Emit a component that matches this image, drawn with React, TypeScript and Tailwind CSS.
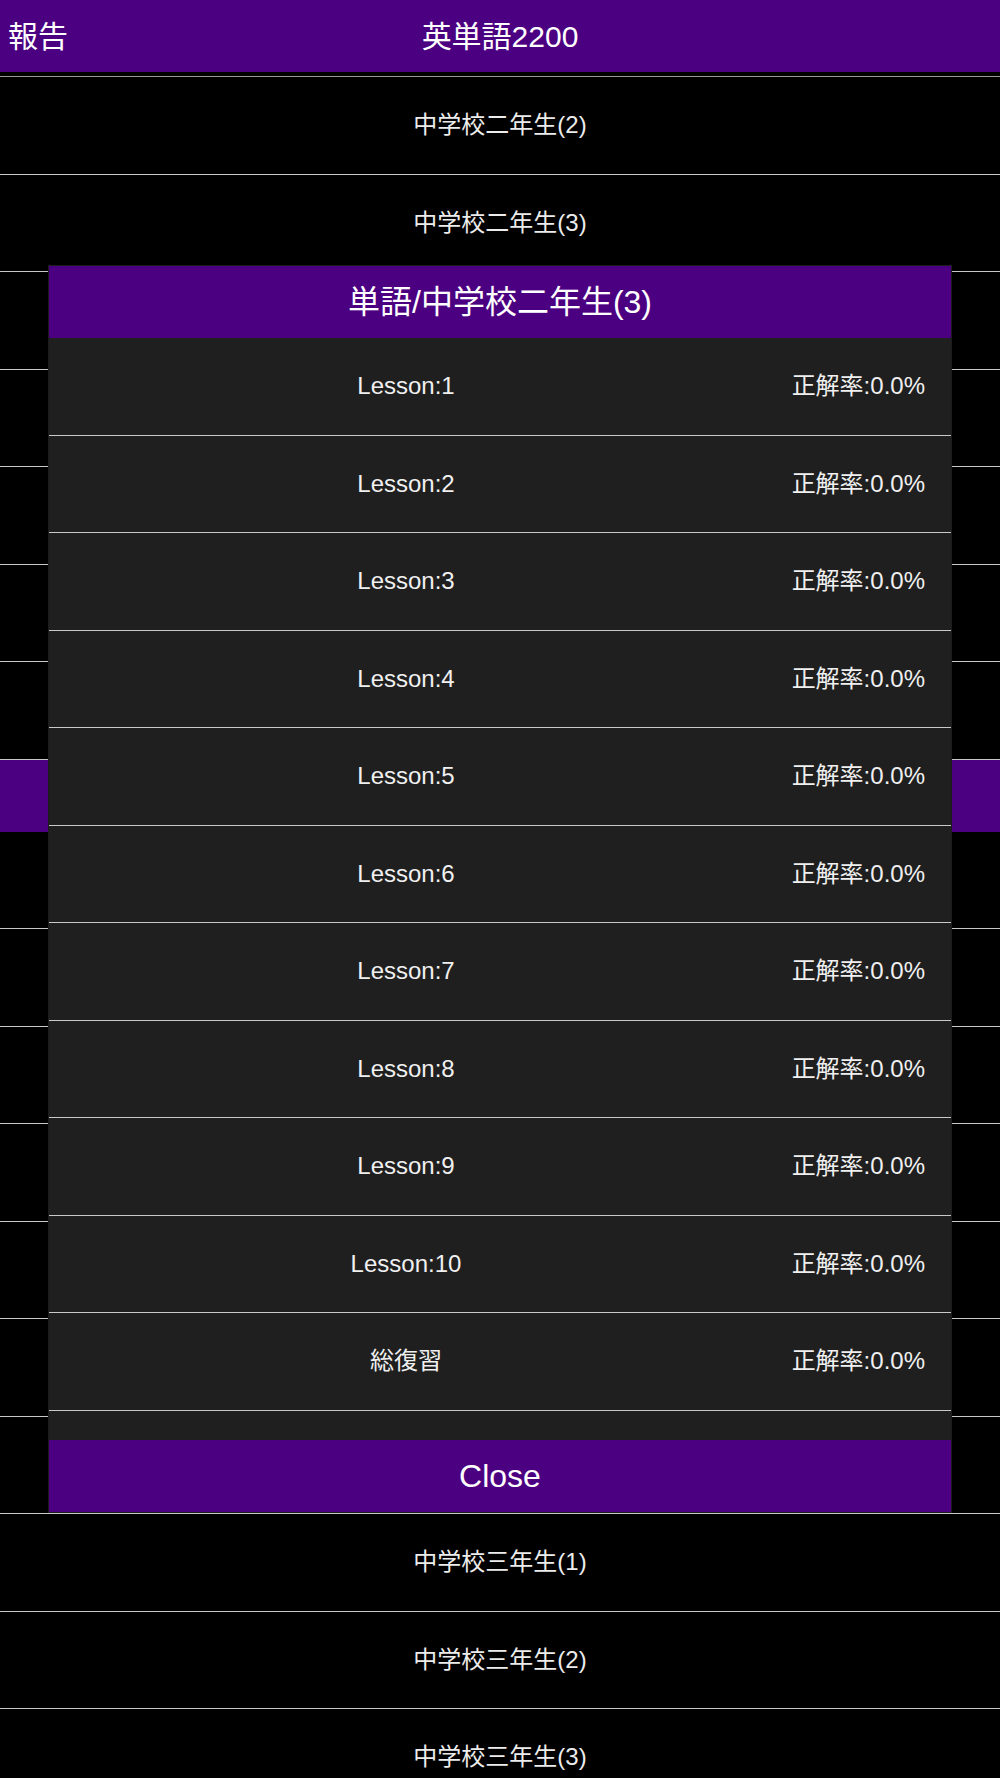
import React from "react";

const FONT = { fontFamily: '"Liberation Sans", "Noto Sans CJK JP", sans-serif' };

function BgRow({ label }: { label?: string }) {
  return (
    <div className="h-[97.5px] border-b border-[#c8c8c8] flex items-center justify-center text-[24px] text-[#ececec]">
      {label}
    </div>
  );
}

function LessonRow({ label }: { label?: string }) {
  return (
    <div className="h-[97.5px] shrink-0 border-b border-[#c8c8c8] flex items-center text-[24px] text-[#f0f0f0]">
      {label ? (
        <>
          <div className="w-[714px] text-center">{label}</div>
          <div className="flex-1 text-right pr-[26px]">正解率:0.0%</div>
        </>
      ) : null}
    </div>
  );
}

export default function App() {
  const hiddenTop = [1, 2, 3, 4, 5];
  const hiddenMid = [1, 2, 3, 4, 5, 6, 7];
  const bottomRows = ["中学校三年生(1)", "中学校三年生(2)", "中学校三年生(3)"];
  const lessons = [
    "Lesson:1",
    "Lesson:2",
    "Lesson:3",
    "Lesson:4",
    "Lesson:5",
    "Lesson:6",
    "Lesson:7",
    "Lesson:8",
    "Lesson:9",
    "Lesson:10",
    "総復習",
  ];

  return (
    <div className="relative w-[1000px] h-[1778px] overflow-hidden bg-black" style={FONT}>
      {/* header */}
      <div className="relative h-[72px] bg-[#4b0082] flex items-center justify-center text-white text-[30px]">
        <span className="absolute left-[8px] top-1/2 -translate-y-1/2">報告</span>
        <span>英単語2200</span>
      </div>
      <div className="h-[4px] bg-black" />
      <div className="h-[1px] bg-[#9a9a9a]" />

      <BgRow label="中学校二年生(2)" />
      <BgRow label="中学校二年生(3)" />
      {hiddenTop.map((r) => (
        <BgRow key={`t${r}`} />
      ))}
      <div className="h-[72px] bg-[#4b0082]" />
      {hiddenMid.map((r) => (
        <BgRow key={`m${r}`} />
      ))}
      {bottomRows.map((r) => (
        <BgRow key={r} label={r} />
      ))}

      {/* modal */}
      <div className="absolute left-[48px] top-[265px] w-[904px] h-[1248px] border border-[#1c1c1c] bg-[#1f1f1f] flex flex-col">
        <div className="h-[72px] shrink-0 bg-[#4b0082] flex items-center justify-center text-white text-[32px]">
          単語/中学校二年生(3)
        </div>
        <div className="flex-1 overflow-hidden flex flex-col">
          {lessons.map((l) => (
            <LessonRow key={l} label={l} />
          ))}
          <LessonRow />
        </div>
        <div className="h-[72px] shrink-0 bg-[#4b0082] flex items-center justify-center text-white text-[32px]">
          Close
        </div>
      </div>
    </div>
  );
}
